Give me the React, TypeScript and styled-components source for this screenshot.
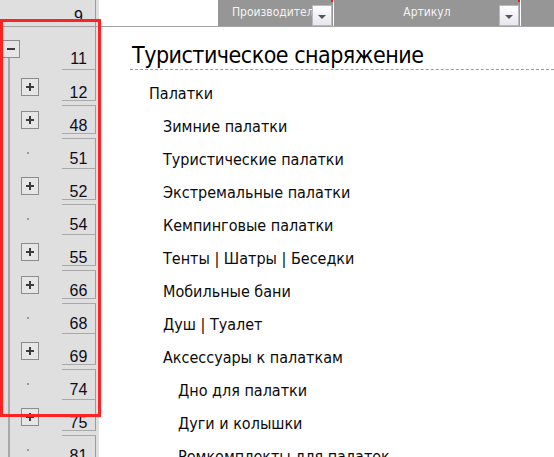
import * as React from "react";
import styled, { createGlobalStyle, css } from "styled-components";

const GlobalStyle = createGlobalStyle`
  html, body {
    margin: 0;
    padding: 0;
    background: #ffffff;
  }
  body {
    width: 554px;
    height: 457px;
    overflow: hidden;
  }
`;

type Marker = "minus" | "plus" | "dot";

interface RowData {
  n: number;
  marker: Marker;
  text: string;
  level: number;
  title?: boolean;
}

const rows: RowData[] = [
  { n: 11, marker: "minus", text: "Туристическое снаряжение", level: 0, title: true },
  { n: 12, marker: "plus", text: "Палатки", level: 0 },
  { n: 48, marker: "plus", text: "Зимние палатки", level: 1 },
  { n: 51, marker: "dot", text: "Туристические палатки", level: 1 },
  { n: 52, marker: "plus", text: "Экстремальные палатки", level: 1 },
  { n: 54, marker: "dot", text: "Кемпинговые палатки", level: 1 },
  { n: 55, marker: "plus", text: "Тенты | Шатры | Беседки", level: 1 },
  { n: 66, marker: "plus", text: "Мобильные бани", level: 1 },
  { n: 68, marker: "dot", text: "Душ | Туалет", level: 1 },
  { n: 69, marker: "plus", text: "Аксессуары к палаткам", level: 1 },
  { n: 74, marker: "dot", text: "Дно для палатки", level: 2 },
  { n: 75, marker: "plus", text: "Дуги и колышки", level: 2 },
  { n: 81, marker: "dot", text: "Ремкомплекты для палаток", level: 2 },
];

// hidden rows follow every collapsed group, Excel draws them as a doubled line
const indents = [50, 64, 79];

const Sheet = styled.div`
  position: relative;
  width: 554px;
  height: 457px;
  overflow: hidden;
  display: flex;
  flex-direction: column;
`;

const HeaderRow = styled.div`
  display: flex;
  height: 27px;
  flex: 0 0 27px;
  box-sizing: border-box;
  border-bottom: 1px solid #a3a3a3;
`;

const Side = styled.div`
  display: flex;
  flex: 0 0 99px;
  background: #dfdfdf;
`;

const OutlineCol = styled.div<{ $first?: boolean; $rail?: boolean }>`
  flex: 0 0 62px;
  display: flex;
  align-items: center;
  box-sizing: border-box;
  padding-left: ${(p) => (p.$first ? "2px" : "21px")};
  ${(p) =>
    p.$rail &&
    css`
      background: linear-gradient(
          to right,
          transparent 8px,
          #a9a9a9 8px,
          #a9a9a9 10px,
          transparent 10px
        )
        no-repeat;
      background-position: 0 ${p.$first ? "31px" : "0"};
      background-size: 100% 100%;
    `}
`;

const HeadCol = styled.div<{ $gapBelow?: boolean; $gapAbove?: boolean; $pad?: number }>`
  flex: 0 0 34px;
  box-sizing: border-box;
  display: flex;
  align-items: flex-end;
  justify-content: center;
  border-right: 1px solid #9c9c9c;
  border-bottom: 1px solid #a9a9a9;
  margin-bottom: ${(p) => (p.$gapBelow ? 2 : 0)}px;
  ${(p) =>
    p.$gapAbove &&
    css`
      margin-top: 2px;
      border-top: 1px solid #a9a9a9;
    `}
  padding-bottom: ${(p) => p.$pad ?? 2}px;
  font-family: "Liberation Sans", Arial, sans-serif;
  font-size: 16px;
  line-height: 14px;
  color: #0c0c1c;
`;

const TopHead = styled(HeadCol)`
  border-bottom: none;
`;

const Blank = styled.div<{ $w: number }>`
  flex: 0 0 ${(p) => p.$w}px;
  background: #ffffff;
`;

const FilterCell = styled.div<{ $w: number; $pad?: number }>`
  position: relative;
  flex: 0 0 ${(p) => p.$w}px;
  box-sizing: border-box;
  background: #969696;
  border-right: 1px solid #ffffff;
  overflow: hidden;
  white-space: nowrap;
  padding-top: 5px;
  padding-left: ${(p) => p.$pad ?? 0}px;
  text-align: ${(p) => (p.$pad ? "left" : "center")};
  font-family: "DejaVu Sans Condensed", "DejaVu Sans", sans-serif;
  font-stretch: condensed;
  font-size: 12px;
  color: #f3f3f3;

  &::before {
    content: "";
    position: absolute;
    top: 0;
    right: 0;
    width: 2px;
    height: 2px;
    background: #ff1010;
  }
`;

const FilterRest = styled.div`
  flex: 1;
  background: #969696;
`;

const DropButton = styled.span`
  position: absolute;
  right: 1px;
  bottom: 0;
  width: 20px;
  height: 21px;
  box-sizing: border-box;
  border: 1px solid #b9b9c2;
  background: linear-gradient(#ffffff, #e6e6ee);
  display: flex;
  align-items: center;
  justify-content: center;

  &::after {
    content: "";
    width: 0;
    height: 0;
    margin-top: 2px;
    border-left: 4px solid transparent;
    border-right: 4px solid transparent;
    border-top: 4px solid #555555;
  }
`;

const Row = styled.div<{ $h: number }>`
  display: flex;
  flex: 0 0 ${(p) => p.$h}px;
  height: ${(p) => p.$h}px;
`;

const Toggle = styled.span<{ $kind: "minus" | "plus" }>`
  position: relative;
  display: block;
  width: 18px;
  height: 18px;
  box-sizing: border-box;
  border: 1px solid #8c8c8c;
  background: #e6e6e6;

  &::before {
    content: "";
    position: absolute;
    left: 4px;
    top: 7px;
    width: 8px;
    height: 2px;
    background: #3c3c3c;
  }
  ${(p) =>
    p.$kind === "plus" &&
    css`
      &::after {
        content: "";
        position: absolute;
        left: 7px;
        top: 4px;
        width: 2px;
        height: 8px;
        background: #3c3c3c;
      }
    `}
`;

const Dot = styled.span`
  display: block;
  width: 2px;
  height: 2px;
  margin-left: 6px;
  background: #9a9a9a;
`;

const Cell = styled.div<{ $indent: number }>`
  flex: 1;
  display: flex;
  align-items: flex-end;
  box-sizing: border-box;
  padding-left: ${(p) => p.$indent}px;
  white-space: nowrap;
  font-family: "DejaVu Sans Condensed", "DejaVu Sans", sans-serif;
  font-stretch: condensed;
  font-size: 16px;
  line-height: 19px;
  color: #0a0a0a;
`;

const TitleCell = styled.div`
  flex: 1;
  display: flex;
  align-items: flex-end;
  margin-left: 31px;
  box-sizing: border-box;
  border-bottom: 1px dashed #9a9a9a;
  padding-left: 2px;
  white-space: nowrap;
  font-family: "DejaVu Sans Condensed", "DejaVu Sans", sans-serif;
  font-stretch: condensed;
  font-size: 23px;
  letter-spacing: -0.5px;
  line-height: 27px;
  color: #000000;
`;

const Highlight = styled.div`
  position: absolute;
  left: 0;
  top: 19px;
  width: 101px;
  height: 398px;
  box-sizing: border-box;
  border: 3px solid #ff2222;
  pointer-events: none;
`;

export default function App() {
  return (
    <>
      <GlobalStyle />
      <Sheet>
        <HeaderRow>
          <Side>
            <OutlineCol />
            <TopHead $pad={2}>9</TopHead>
          </Side>
          <Blank $w={119} />
          <FilterCell $w={116} $pad={14}>
            Производитель
            <DropButton />
          </FilterCell>
          <FilterCell $w={187}>
            Артикул
            <DropButton />
          </FilterCell>
          <FilterRest />
        </HeaderRow>
        {rows.map((r, i) => {
          const collapsed = r.marker === "plus";
          const prevCollapsed = i > 0 && rows[i - 1].marker === "plus";
          return (
            <Row key={r.n} $h={i === 0 ? 43 : 33}>
              <Side>
                <OutlineCol $first={i === 0} $rail>
                  {r.marker === "dot" ? <Dot /> : <Toggle $kind={r.marker} />}
                </OutlineCol>
                <HeadCol
                  $gapBelow={collapsed}
                  $gapAbove={prevCollapsed}
                  $pad={i === 0 ? 3 : collapsed ? 0 : 2}
                >
                  {r.n}
                </HeadCol>
              </Side>
              {r.title ? (
                <TitleCell>{r.text}</TitleCell>
              ) : (
                <Cell $indent={indents[r.level]}>{r.text}</Cell>
              )}
            </Row>
          );
        })}
        <Highlight />
      </Sheet>
    </>
  );
}
